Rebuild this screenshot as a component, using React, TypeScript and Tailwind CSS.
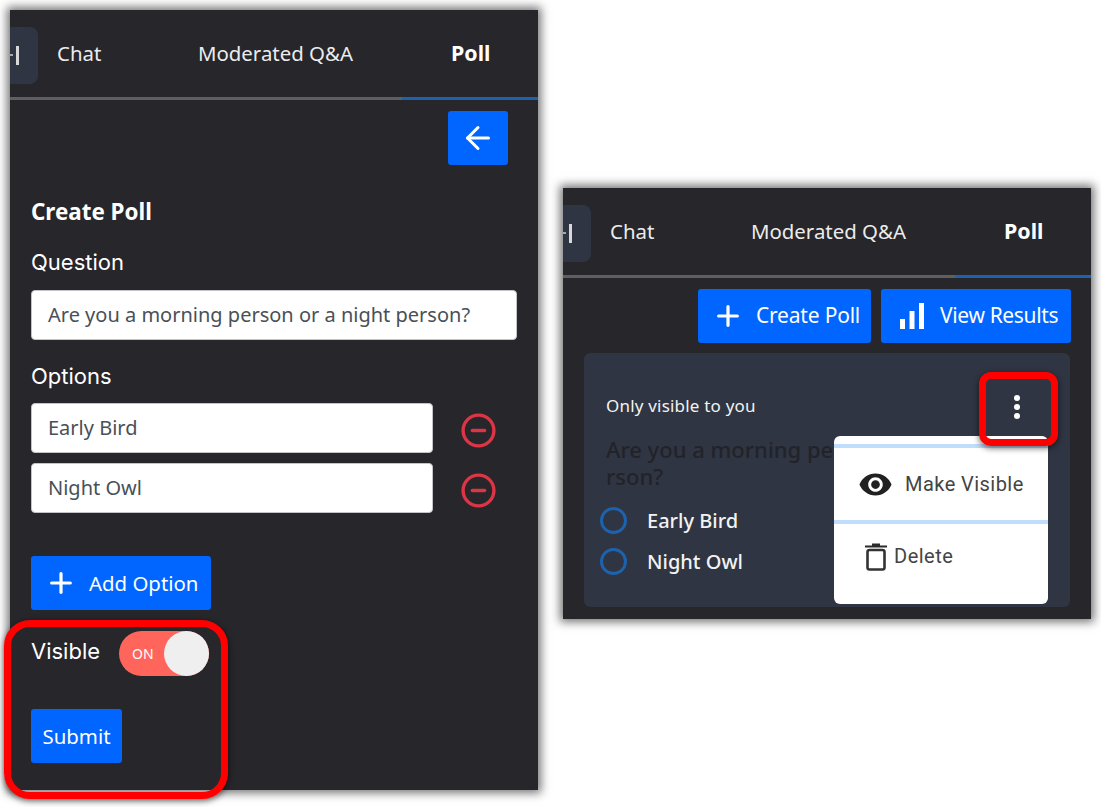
import React from "react";
import { Plus, ArrowLeft, CircleMinus } from "lucide-react";

const ubuntu = "font-['Noto_Sans','Open_Sans',sans-serif]";
const poppins = "font-['Inter','Noto_Sans',sans-serif]";

function Tabs() {
  return (
    <div>
      <div className={`flex items-center h-[87px] text-[20.4px] text-[#ececec] ${ubuntu}`}>
        <div className="w-[28px] h-[57px] mt-[3px] bg-[#2f3542] rounded-r-lg flex items-center">
          <div className="w-[3px] h-[2px] bg-[#a8a8a8]" />
          <div className="w-[3px] h-[19px] ml-[3px] bg-[#d8d8d8]" />
        </div>
        <span className="ml-[19px] w-[141px]">Chat</span>
        <span className="w-[253px]">Moderated Q&amp;A</span>
        <span className="font-bold text-white text-[21.4px]">Poll</span>
      </div>
      <div className="flex h-[3px] bg-[#5f5f61]">
        <div className="flex-1" />
        <div className="w-[136px] bg-[#1d62ad]" />
      </div>
    </div>
  );
}

function Btn({ children, className = "" }: { children: React.ReactNode; className?: string }) {
  return (
    <div className={`h-[54px] bg-[#0066ff] rounded-[3px] flex items-center text-white text-[20.4px] ${ubuntu} ${className}`}>
      {children}
    </div>
  );
}

function Field({ text, className = "" }: { text: string; className?: string }) {
  return (
    <div className={`bg-white border border-[#c4c4c8] rounded-[4px] pl-[16px] flex items-center text-[20px] text-[#495057] ${ubuntu} ${className}`}>
      {text}
    </div>
  );
}

function Option({ text }: { text: string }) {
  return (
    <div className="flex items-center">
      <Field text={text} className="w-[402px] h-[50px]" />
      <CircleMinus size={37} strokeWidth={2.2} className="ml-[27px] mt-[4px] text-[#dc3545]" />
    </div>
  );
}

function Radio({ text }: { text: string }) {
  return (
    <div className="flex items-center h-[41px]">
      <div className="w-[27px] h-[27px] rounded-full border-[3px] border-[#1d62ad]" />
      <span className="ml-[20px] text-[20px] text-[#f2f2f2] font-medium">{text}</span>
    </div>
  );
}

function BarsIcon() {
  return (
    <svg width="26" height="26" viewBox="0 0 26 26" fill="white">
      <rect x="1" y="16" width="5" height="10" />
      <rect x="10.5" y="8" width="5" height="18" />
      <rect x="20" y="0" width="5" height="26" />
    </svg>
  );
}

function EyeIcon() {
  return (
    <svg width="35" height="35" viewBox="0 0 24 24" fill="#212121">
      <path d="M12 4.5C7 4.5 2.73 7.61 1 12c1.73 4.39 6 7.5 11 7.5s9.27-3.11 11-7.5c-1.73-4.39-6-7.5-11-7.5zM12 17c-2.76 0-5-2.24-5-5s2.24-5 5-5 5 2.24 5 5-2.24 5-5 5zm0-8c-1.66 0-3 1.34-3 3s1.34 3 3 3 3-1.34 3-3-1.34-3-3-3z" />
    </svg>
  );
}

function TrashIcon() {
  return (
    <svg width="22" height="29" viewBox="0 0 22 29" fill="none" className="shrink-0">
      <path d="M0 3.5H22V5.5H0z M7 1.5H15V3.5H7z" fill="#2b2b2b" />
      <rect x="2.5" y="8" width="17" height="19.5" rx="2" stroke="#333333" strokeWidth="2.6" />
    </svg>
  );
}

export default function App() {
  return (
    <div className="w-[1101px] h-[807px] bg-white overflow-hidden flex items-start pl-[10px] pt-[10px] gap-[25px]">
      {/* left panel */}
      <div className="relative w-[528px] h-[780px] bg-[#26262b] shadow-[0_0_9px_3px_rgba(0,0,0,0.55)] shrink-0">
        <Tabs />
        <div className="pl-[21px] pr-[21px]">
          <div className="flex justify-end pr-[9px] pt-[11px]">
            <Btn className="w-[60px] justify-center">
              <ArrowLeft size={36} strokeWidth={2} />
            </Btn>
          </div>
          <div className={`mt-[31px] text-[22.4px] leading-[32px] font-bold text-white ${ubuntu}`}>Create Poll</div>
          <div className={`mt-[18px] text-[22px] leading-[32px] text-white ${poppins}`}>Question</div>
          <Field text="Are you a morning person or a night person?" className="mt-[12px] w-[486px] h-[50px]" />
          <div className={`mt-[20px] text-[22px] leading-[32px] text-white ${poppins}`}>Options</div>
          <div className="mt-[11px] flex flex-col gap-[10px]">
            <Option text="Early Bird" />
            <Option text="Night Owl" />
          </div>
          <Btn className="mt-[43px] w-[180px] pl-[14px]">
            <Plus size={32} strokeWidth={2.4} />
            <span className="ml-[12px]">Add Option</span>
          </Btn>
          <div className="flex items-start mt-[21px]">
            <span className={`mt-[4px] w-[88px] text-[22px] leading-[32px] text-white ${poppins}`}>Visible</span>
            <div className="w-[90px] h-[45px] bg-[#ff655b] rounded-full flex items-center justify-between">
              <span className={`ml-[13px] text-[14px] text-white ${ubuntu}`}>ON</span>
              <div className="w-[45px] h-[45px] rounded-full bg-[#efefef]" />
            </div>
          </div>
          <Btn className="mt-[33px] w-[91px] justify-center">Submit</Btn>
        </div>
        <div className="absolute left-[-6px] top-[610px] w-[224px] h-[179px] rounded-[26px] border-[7px] border-[#ff0000] shadow-[0_2px_6px_rgba(0,0,0,0.6)]" />
      </div>

      {/* right panel */}
      <div className="relative mt-[178px] w-[528px] h-[431px] bg-[#26262b] shadow-[0_0_9px_3px_rgba(0,0,0,0.55)] shrink-0">
        <Tabs />
        <div className="flex justify-end gap-[10px] pt-[11px] pr-[20px]">
          <Btn className="w-[173px] pl-[14px]">
            <Plus size={32} strokeWidth={2.4} />
            <span className="ml-[12px] text-[21px] tracking-[-0.2px]">Create Poll</span>
          </Btn>
          <Btn className="w-[190px] pl-[18px]">
            <BarsIcon />
            <span className="ml-[15px] text-[21px] tracking-[-0.35px]">View Results</span>
          </Btn>
        </div>
        <div className={`relative ml-[21px] mt-[10px] w-[486px] h-[254px] bg-[#2f3542] rounded-[6px] pl-[22px] pt-[41px] ${ubuntu}`}>
          <div className="text-[17px] leading-[24px] text-[#f2f2f2] tracking-[0.2px]">Only visible to you</div>
          <div className="mt-[18px] w-[235px] break-all text-[22px] leading-[27px] font-medium text-[#222329]">Are you a morning person?</div>
          <div className="mt-[10px] ml-[-6px]">
            <Radio text="Early Bird" />
            <Radio text="Night Owl" />
          </div>
          <div className="absolute left-[430px] top-[42px] flex flex-col gap-[3px]">
            <div className="w-[6px] h-[6px] rounded-full bg-white" />
            <div className="w-[6px] h-[6px] rounded-full bg-white" />
            <div className="w-[6px] h-[6px] rounded-full bg-white" />
          </div>
          <div className="absolute left-[250px] top-[83px] w-[214px] h-[168px] bg-white rounded-[6px] font-['Roboto',sans-serif] text-[20px] text-[#444444]">
            <div className="mt-[8px] h-[4px] bg-[#c0ddfb]" />
            <div className="h-[72px] flex items-center pl-[24px]">
              <EyeIcon />
              <span className="ml-[12px] tracking-[0.45px]">Make Visible</span>
            </div>
            <div className="h-[4px] bg-[#c0ddfb]" />
            <div className="flex items-center pl-[31px] h-[64px]">
              <TrashIcon />
              <span className="ml-[7px] tracking-[0.5px]">Delete</span>
            </div>
          </div>
        </div>
        <div className="absolute left-[416px] top-[184px] w-[79px] h-[74px] rounded-[12px] border-[7px] border-[#ff0000] shadow-[0_2px_6px_rgba(0,0,0,0.6)]" />
      </div>
    </div>
  );
}
